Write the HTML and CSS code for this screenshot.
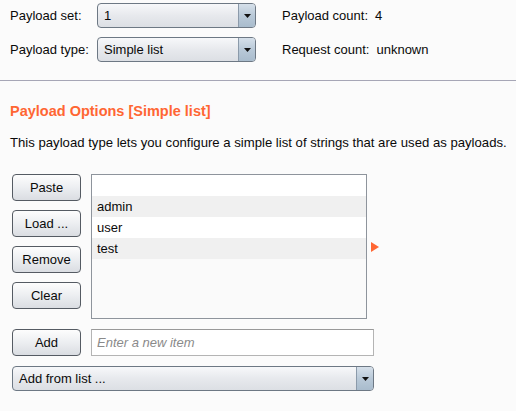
FILE: index.html
```html
<!DOCTYPE html>
<html>
<head>
<meta charset="utf-8">
<link rel="stylesheet" href="styles.css">
</head>
<body>
<div class="top">
  <div class="field-row">
    <span class="label">Payload set:</span>
    <div class="combo combo-small">
      <span class="combo-text">1</span>
      <span class="combo-btn"><svg width="7" height="4" viewBox="0 0 7 4"><path d="M0 0H7L3.5 4Z" fill="#111"/></svg></span>
    </div>
    <span class="count"><span>Payload count:</span><span>4</span></span>
  </div>
  <div class="field-row">
    <span class="label">Payload type:</span>
    <div class="combo combo-small">
      <span class="combo-text">Simple list</span>
      <span class="combo-btn"><svg width="7" height="4" viewBox="0 0 7 4"><path d="M0 0H7L3.5 4Z" fill="#111"/></svg></span>
    </div>
    <span class="count"><span>Request count:</span><span>unknown</span></span>
  </div>
</div>
<div class="sep"></div>
<section class="options">
  <h2 class="heading">Payload Options [Simple list]</h2>
  <p class="desc">This payload type lets you configure a simple list of strings that are used as payloads.</p>
  <div class="editor">
    <div class="buttons">
      <button class="btn">Paste</button>
      <button class="btn">Load ...</button>
      <button class="btn">Remove</button>
      <button class="btn">Clear</button>
    </div>
    <div class="list">
      <div class="item"></div>
      <div class="item alt">admin</div>
      <div class="item">user</div>
      <div class="item alt">test</div>
    </div>
    <div class="arrow-col"><span class="arrow"></span></div>
  </div>
  <div class="add-row">
    <button class="btn">Add</button>
    <input class="new-item" type="text" placeholder="Enter a new item">
  </div>
  <div class="combo combo-wide">
    <span class="combo-text">Add from list ...</span>
    <span class="combo-btn"><svg width="7" height="4" viewBox="0 0 7 4"><path d="M0 0H7L3.5 4Z" fill="#111"/></svg></span>
  </div>
</section>
</body>
</html>
```

FILE: styles.css
```css
html, body {
  margin: 0;
  padding: 0;
  background: #fbfbfb;
  font-family: "Liberation Sans", Arial, sans-serif;
  font-size: 13px;
  color: #0a0a0a;
}

.top {
  height: 80px;
  box-sizing: border-box;
  padding: 3px 0 0 10px;
  display: flex;
  flex-direction: column;
  gap: 9px;
}

.field-row {
  display: flex;
  align-items: center;
  height: 25px;
}

.label {
  width: 87px;
}

.count {
  margin-left: 26px;
  display: flex;
  gap: 7px;
}

.combo {
  box-sizing: border-box;
  height: 25px;
  display: flex;
  border: 1px solid #6d7884;
  border-radius: 4px;
  background: linear-gradient(#f7f8fa, #e7e9ed 50%, #dcdfe4);
  overflow: hidden;
}

.combo-small {
  width: 159px;
}

.combo-wide {
  width: 362px;
  margin-left: 2px;
  margin-top: 10px;
}

.combo-text {
  flex: 1;
  display: flex;
  align-items: center;
  padding-left: 6px;
}

.combo-btn {
  width: 16px;
  border-left: 1px solid #8b9aaa;
  background: linear-gradient(#d6e0ea, #b9c9d8 50%, #a9bccd);
  display: flex;
  align-items: center;
  justify-content: center;
}

.sep {
  height: 1px;
  background: #a6a6b6;
}

.options {
  padding-left: 10px;
}

.heading {
  margin: 22px 0 0 0;
  font-size: 14.5px;
  line-height: 16px;
  font-weight: bold;
  color: #ff6633;
}

.desc {
  margin: 16px 0 0 0;
  font-size: 13.15px;
  line-height: 16px;
}

.editor {
  margin-top: 23px;
  display: flex;
  align-items: stretch;
}

.buttons {
  margin-left: 2px;
  width: 69px;
  display: flex;
  flex-direction: column;
  gap: 9px;
}

.btn {
  box-sizing: border-box;
  width: 69px;
  height: 27px;
  padding: 0;
  border: 1px solid #555b63;
  border-radius: 4px;
  background: linear-gradient(#fdfdfd, #eceef1 50%, #dadde2);
  font-family: "Liberation Sans", Arial, sans-serif;
  font-size: 13px;
  color: #0a0a0a;
}

.list {
  box-sizing: border-box;
  margin-left: 10px;
  width: 276px;
  height: 145px;
  border: 1px solid #8e949c;
  background: #fafafa;
}

.item {
  height: 21px;
  line-height: 21px;
  padding-left: 5px;
  background: #ffffff;
}

.item.alt {
  background: #f0f0f0;
}

.arrow-col {
  display: flex;
  align-items: center;
  padding-left: 4px;
}

.arrow {
  width: 0;
  height: 0;
  border-top: 5px solid transparent;
  border-bottom: 5px solid transparent;
  border-left: 8px solid #ff6633;
}

.add-row {
  margin-top: 10px;
  margin-left: 2px;
  display: flex;
  gap: 10px;
}

.new-item {
  box-sizing: border-box;
  width: 283px;
  height: 27px;
  margin: 0;
  padding: 0 5px;
  border: 1px solid #b4b4b4;
  border-top-color: #999;
  background: #fff;
  font-family: "Liberation Sans", Arial, sans-serif;
  font-size: 13px;
  outline: none;
}

.new-item::placeholder {
  color: #8a8a8a;
  font-style: italic;
}
```
